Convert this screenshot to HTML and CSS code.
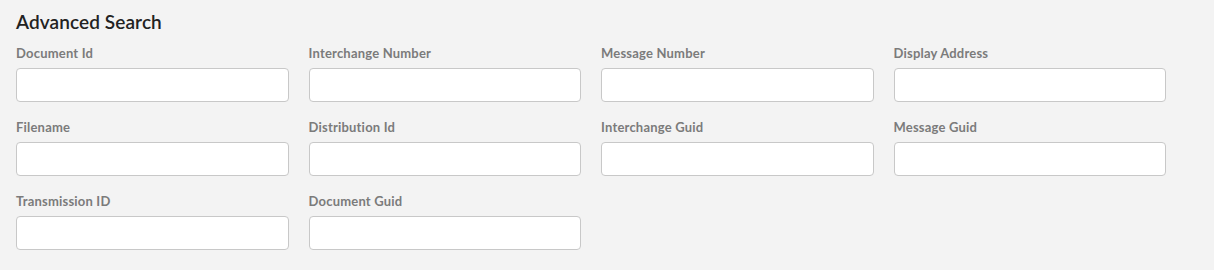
FILE: index.html
```html
<!DOCTYPE html>
<html lang="en">
<head>
<meta charset="UTF-8">
<meta name="viewport" content="width=device-width, initial-scale=1.0">
<title>Advanced Search</title>
<link rel="stylesheet" href="styles.css">
</head>
<body>

<div class="panel">
  <h2>Advanced Search</h2>
  <form class="search-grid">
    <div class="field">
      <label for="documentId">Document Id</label>
      <input type="text" id="documentId">
    </div>
    <div class="field">
      <label for="interchangeNumber">Interchange Number</label>
      <input type="text" id="interchangeNumber">
    </div>
    <div class="field">
      <label for="messageNumber">Message Number</label>
      <input type="text" id="messageNumber">
    </div>
    <div class="field">
      <label for="displayAddress">Display Address</label>
      <input type="text" id="displayAddress">
    </div>

    <div class="field">
      <label for="filename">Filename</label>
      <input type="text" id="filename">
    </div>
    <div class="field">
      <label for="distributionId">Distribution Id</label>
      <input type="text" id="distributionId">
    </div>
    <div class="field">
      <label for="interchangeGuid">Interchange Guid</label>
      <input type="text" id="interchangeGuid">
    </div>
    <div class="field">
      <label for="messageGuid">Message Guid</label>
      <input type="text" id="messageGuid">
    </div>

    <div class="field">
      <label for="transmissionId">Transmission ID</label>
      <input type="text" id="transmissionId">
    </div>
    <div class="field">
      <label for="documentGuid">Document Guid</label>
      <input type="text" id="documentGuid">
    </div>
  </form>
</div>

</body>
</html>
```

FILE: styles.css
```css
body { font-family: Lato, 'Open Sans', sans-serif; background-color: #f3f3f3; margin: 0; padding: 0; }
.panel { width: 1150px; padding: 10px 16px 0 16px; }
h2 { margin: 0 0 11px 0; font-size: 19px; line-height: 24px; font-weight: 600; color: #222; letter-spacing: 0.1px; }
.search-grid { display: grid; grid-template-columns: repeat(4, 1fr); column-gap: 20px; row-gap: 17px; }
.field { display: flex; flex-direction: column; }
label { font-size: 13px; line-height: 16px; font-weight: 700; color: #7b7b7b; margin-bottom: 7px; letter-spacing: 0.2px; }
input { box-sizing: border-box; height: 34px; width: 100%; border: 1px solid #c8c8c8; border-radius: 4px; background-color: #fff; padding: 6px 10px; font-family: inherit; font-size: 13px; }
```
